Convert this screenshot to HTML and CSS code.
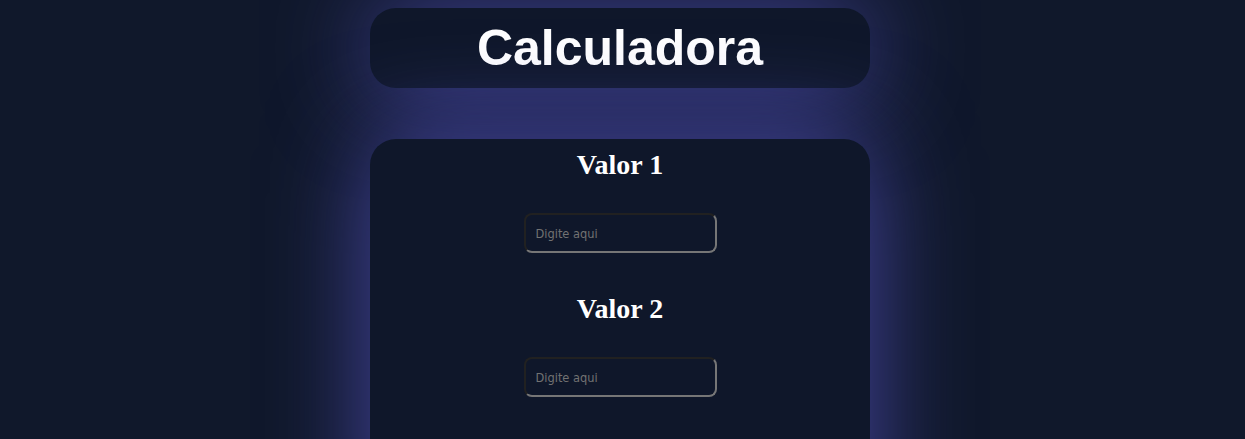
FILE: index.html
```html
<!DOCTYPE html>
<html lang="pt-BR">
<head>
<meta charset="utf-8">
<title>Calculadora</title>
<link rel="stylesheet" href="styles.css">
</head>
<body>
<header class="header-card">
  <h1 class="title">Calculadora</h1>
</header>
<main class="calc-card">
  <section class="field">
    <h2 class="label">Valor 1</h2>
    <input class="input" type="text" placeholder="Digite aqui">
  </section>
  <section class="field">
    <h2 class="label">Valor 2</h2>
    <input class="input" type="text" placeholder="Digite aqui">
  </section>
</main>
</body>
</html>
```

FILE: styles.css
```css
html, body {
  background: #10182b;
}
body {
  margin: 0;
  padding-top: 8px;
  padding-right: 5px;
  display: flex;
  flex-direction: column;
  align-items: center;
  gap: 51px;
  font-family: "Liberation Serif", serif;
  color: #ffffff;
}
.header-card {
  width: 500px;
  height: 80px;
  border-radius: 26px;
  background: #0f172a;
  box-shadow: 0 0 100px rgba(88, 86, 200, 0.75);
  display: flex;
  align-items: center;
  justify-content: center;
}
.title {
  margin: 0;
  font-family: "Liberation Sans", Arial, sans-serif;
  font-size: 50px;
  font-weight: bold;
  line-height: 1;
}
.calc-card {
  width: 500px;
  min-height: 400px;
  border-radius: 26px;
  background: #0f172a;
  box-shadow: 0 0 100px rgba(88, 86, 200, 0.75);
  display: flex;
  flex-direction: column;
  align-items: center;
  padding-top: 10px;
}
.field {
  display: flex;
  flex-direction: column;
  align-items: center;
  margin-bottom: 40px;
}
.label {
  margin: 0 0 32px;
  font-size: 28px;
  font-weight: bold;
  line-height: 32px;
}
.input {
  box-sizing: border-box;
  width: 193px;
  height: 40px;
  padding: 0 10px;
  border: 2px inset #767676;
  border-radius: 8px;
  background: transparent;
  color: #ffffff;
  font-family: "DejaVu Sans Condensed", "DejaVu Sans", sans-serif;
  font-stretch: condensed;
  font-size: 12.7px;
}
.input::placeholder {
  color: #727272;
}
```
